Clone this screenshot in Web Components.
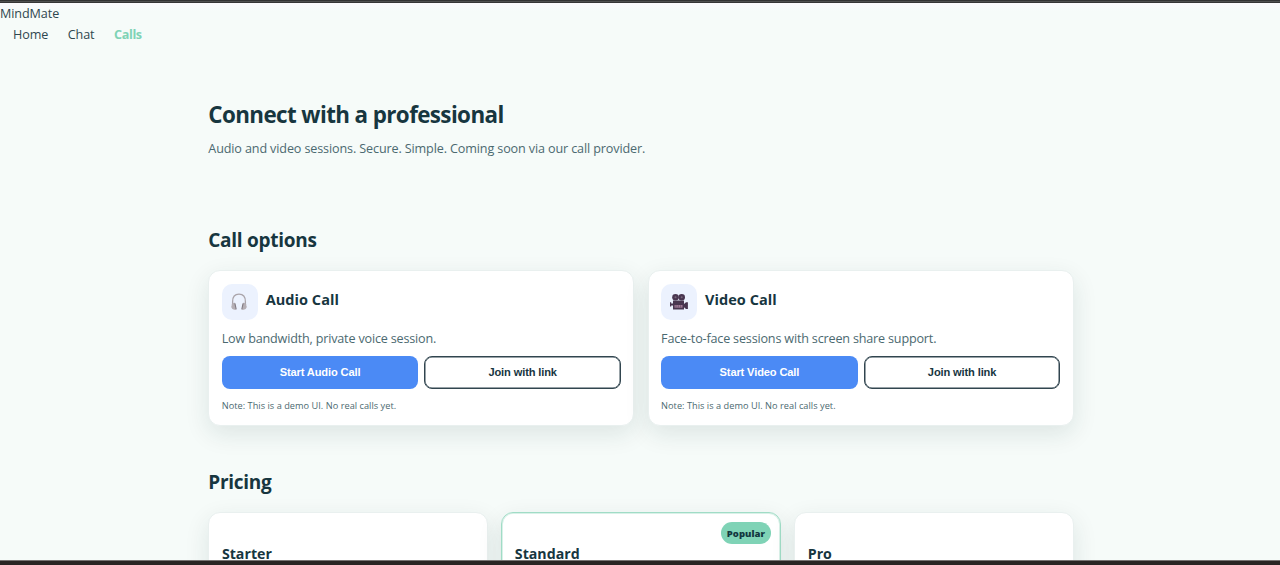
<!DOCTYPE html>
<html lang="en">
<head>
<meta charset="utf-8">
<title>MindMate – Calls</title>
<style>
html, body { margin: 0; height: 565px; overflow: hidden; }
body { font-family: "Open Sans", sans-serif; color: #17363f; background: #f6fbf9; }
</style>
</head>
<body>
<mm-page></mm-page>
<script>
const define = (name, html) => customElements.define(name, class extends HTMLElement {
  constructor() {
    super();
    const t = document.createElement('template');
    t.innerHTML = html;
    this.attachShadow({ mode: 'open' }).append(t.content.cloneNode(true));
  }
});

define('mm-nav', `
<style>
:host { display: block; color: #2f474f; font-size: 12.6px; }
.brand { line-height: 20px; height: 20px; padding-top: 1px; letter-spacing: -.08px; }
nav { display: flex; gap: 19.5px; padding-left: 13px; line-height: 22px; letter-spacing: -.1px; }
.active { color: #7fd3b6; font-weight: 700; letter-spacing: -.35px; }
</style>
<div class="brand">MindMate</div>
<nav><span>Home</span><span>Chat</span><span class="active">Calls</span></nav>`);

define('mm-icon', `
<style>
:host { display: grid; place-items: center; width: 36px; height: 36px; border-radius: 10px; background: #ecf2fe; }
::slotted(svg) { display: block; width: 20px; height: 20px; margin-right: 1px; }
</style><slot></slot>`);

define('mm-button', `
<style>
:host { display: block; flex: 1 1 0; min-width: 0; }
button { display: block; width: 100%; height: 33px; padding: 0; border: 0; border-radius: 8px; background: #4b8af5; color: #fff;
  font: 700 11.1px/33px "Liberation Sans", sans-serif; letter-spacing: -.13px; }
:host([outline]) button { background: #fff; color: #17363f; border: 1px solid #31454f; box-shadow: inset 0 0 0 .5px #31454f; line-height: 31px; }
</style><button><slot></slot></button>`);

define('mm-card', `
<style>
:host { display: block; box-sizing: border-box; height: 156px; padding: 12.500px 12.400px 0; border: 1px solid #e9f0ef; border-radius: 12px; background: #fff;
  box-shadow: 0 8px 25px rgba(20,58,58,.11); }
header { display: flex; align-items: center; gap: 8px; height: 36px; }
h3 { margin: 0 0 3px; font-size: 14.5px; line-height: 20px; letter-spacing: .05px; }
p { margin: 8px 0 7px; font-size: 12.6px; line-height: 21px; letter-spacing: -.18px; color: #4b6970; }
.row { display: flex; gap: 6px; }
small { display: block; margin-top: 8px; font-size: 9.2px; line-height: 17px; letter-spacing: .03px; color: #4b6970; }
</style>
<header><slot name="icon"></slot><h3><slot name="title"></slot></h3></header>
<p><slot></slot></p>
<div class="row"><slot name="actions"></slot></div>
<small>Note: This is a demo UI. No real calls yet.</small>`);

define('mm-plan', `
<style>
:host { display: block; position: relative; box-sizing: border-box; height: 180px; padding: 30.500px 12.600px 0; border: 1px solid #e9f0ef; border-radius: 12px; background: #fff;
  box-shadow: 0 8px 25px rgba(20,58,58,.11); }
:host([popular]) { border: 1px solid #a0dcc6; box-shadow: inset 0 0 0 1px #d9f1e8, 0 8px 25px rgba(20,58,58,.11); }
h3 { margin: 0; font-size: 14.2px; line-height: 20px; }
::slotted([slot=badge]) { position: absolute; top: 9px; right: 9px; }
</style>
<slot name="badge"></slot><h3><slot></slot></h3>`);

define('mm-badge', `
<style>
:host { display: block; width: 50px; height: 22px; border-radius: 11px; background: #7fd3b6; color: #123740; text-align: center; font-size: 9.5px; font-weight: 800; line-height: 23px; }
</style><slot></slot>`);

define('mm-page', `
<style>
:host { display: flex; flex-direction: column; height: 565px; overflow: hidden; }
.edge { flex: none; height: 3px; background: linear-gradient(#333 0 1px, #505050 1px 2px, #363636 2px); }
.edge.end { height: 5px; background: linear-gradient(#777372 0 1px, #292423 1px); }
.view { flex: 1; min-height: 0; overflow: hidden; background: linear-gradient(#fcfafd 0, #f6fbf9 8px); }
main { width: 865.500px; margin: 54px 0 0 208.300px; }
h1 { margin: 0; font-size: 22.4px; line-height: 30px; letter-spacing: -.6px; }
.lead { margin: 8px 0 0; font-size: 12.6px; line-height: 22px; letter-spacing: -.13px; color: #4b6970; }
h2 { margin: 0; font-size: 19px; line-height: 28px; letter-spacing: -.28px; }
.options { margin-top: 66px; }
.pricing { margin-top: 42px; }
.grid { display: grid; grid-template-columns: repeat(2, 1fr); gap: 13.3px; margin-top: 16.300px; }
.three { grid-template-columns: repeat(3, 1fr); margin-top: 16px; }
</style>
<div class="edge"></div>
<div class="view">
<mm-nav></mm-nav>
<main>
<h1>Connect with a professional</h1>
<p class="lead">Audio and video sessions. Secure. Simple. Coming soon via our call provider.</p>
<h2 class="options">Call options</h2>
<div class="grid">
<mm-card>
<mm-icon slot="icon"><svg viewBox="0 0 20 20"><path d="M3.6 13V9.7C3.6 5 6.2 2.2 10 2.2S16.400 5 16.400 9.700V13" fill="none" stroke="#aaa4aa" stroke-width="1.300"/><path d="M3 12.200Q4 10.600 5.800 10.800L7.200 17.500Q3.300 18.900 2.200 15Z" fill="#b5afb5"/><path d="M17 12.200Q16 10.600 14.200 10.800L12.800 17.500Q16.700 18.900 17.800 15Z" fill="#b5afb5"/><path d="M5.900 11.400 7.200 17.300M14.100 11.400 12.800 17.300" stroke="#817a82" stroke-width="1.100"/></svg></mm-icon>
<span slot="title">Audio Call</span>
Low bandwidth, private voice session.
<mm-button slot="actions">Start Audio Call</mm-button><mm-button slot="actions" outline>Join with link</mm-button>
</mm-card>
<mm-card>
<mm-icon slot="icon"><svg viewBox="0 0 20 20"><g fill="#493650"><circle cx="6.500" cy="5.300" r="3.300"/><circle cx="12.700" cy="5.300" r="3.300"/><path d="M4 8.500H15V17.400H4ZM1 10.200H2.200V11.500H4V13.500H2.200V14.500H1ZM15 12 17 10.200H18.900V17H17L15 15.200Z"/></g><g fill="#766579"><circle cx="6.500" cy="5.300" r="1"/><circle cx="12.700" cy="5.300" r="1"/></g><path d="M5.500 13H13.500V15.700H5.500Z" fill="#a17b98"/><path d="M7 13.200V15.500M9.300 13.200V15.500M11.600 13.200V15.500" stroke="#624761" stroke-width=".7"/></svg></mm-icon>
<span slot="title">Video Call</span>
Face-to-face sessions with screen share support.
<mm-button slot="actions">Start Video Call</mm-button><mm-button slot="actions" outline>Join with link</mm-button>
</mm-card>
</div>
<h2 class="pricing">Pricing</h2>
<div class="grid three">
<mm-plan>Starter</mm-plan>
<mm-plan popular><mm-badge slot="badge">Popular</mm-badge>Standard</mm-plan>
<mm-plan>Pro</mm-plan>
</div>
</main>
</div>
<div class="edge end"></div>`);
</script>
</body>
</html>
